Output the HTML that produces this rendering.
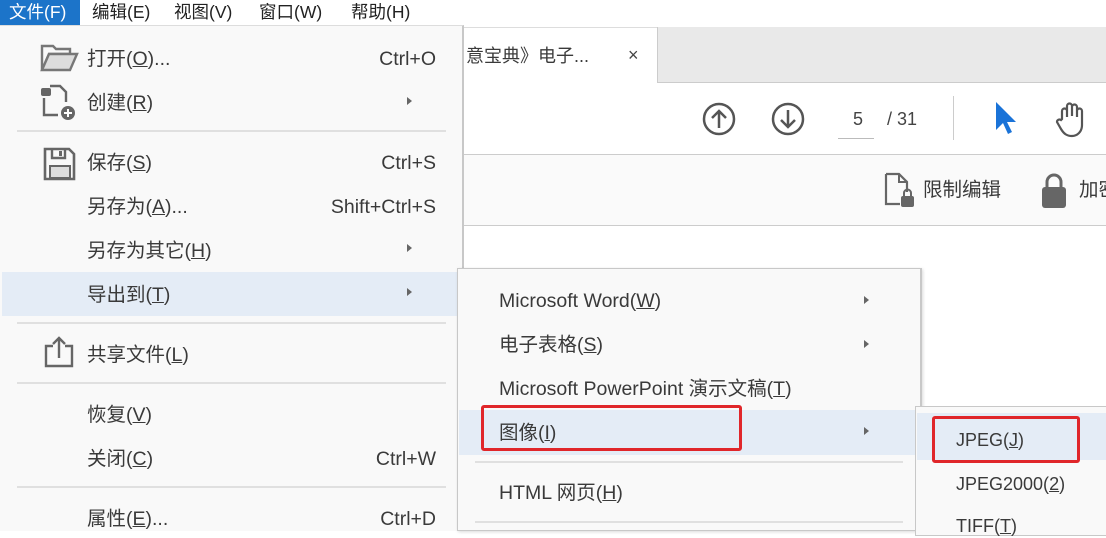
<!DOCTYPE html>
<html><head><meta charset="utf-8"><style>
*{margin:0;padding:0;box-sizing:border-box}
body{width:1106px;height:531px;overflow:hidden;background:#fff;position:relative;font-family:"Liberation Sans","Noto Sans CJK SC",sans-serif;color:#3a3a3a;line-height:24px}
.a{position:absolute;white-space:nowrap}
.mb{font-size:17.5px;top:0px;color:#222}
.t{font-size:19.5px}
.r{position:absolute;white-space:nowrap;font-size:19.5px;right:670px}
.sep{position:absolute;height:2px;background:#e0e0e0}
.arr{position:absolute;width:0;height:0;border-left:5px solid #666;border-top:4px solid transparent;border-bottom:4px solid transparent}
u{text-decoration:underline}
</style></head><body>
<div class="a" style="left:657px;top:27px;width:449px;height:56px;background:#e9e9e9;border-bottom:1px solid #ccc;border-left:1px solid #ccc"></div>
<div class="a" style="left:460px;top:27px;width:197px;height:56px;background:#fff;border-top:1px solid #ddd"></div>
<div class="a t" style="left:466px;top:44px;font-size:18px">意宝典》电子...</div>
<div class="a" style="left:628px;top:43px;font-size:18px;color:#444">×</div>
<div class="a" style="left:460px;top:154px;width:646px;height:1px;background:#ccc"></div>
<div class="a" style="left:460px;top:155px;width:646px;height:71px;background:#fafafa;border-bottom:1px solid #ccc"></div>
<svg class="a" style="left:700px;top:100px" width="40" height="40" viewBox="0 0 40 40"><circle cx="19" cy="19" r="15" fill="none" stroke="#555" stroke-width="2.5"/><path d="M19 28V11M12 18l7-7 7 7" fill="none" stroke="#555" stroke-width="2.5"/></svg>
<svg class="a" style="left:769px;top:100px" width="40" height="40" viewBox="0 0 40 40"><circle cx="19" cy="19" r="15" fill="none" stroke="#555" stroke-width="2.5"/><path d="M19 10v17M12 20l7 7 7-7" fill="none" stroke="#555" stroke-width="2.5"/></svg>
<div class="a" style="left:853px;top:107px;font-size:18px;color:#444">5</div>
<div class="a" style="left:838px;top:138px;width:36px;height:1px;background:#bbb"></div>
<div class="a" style="left:887px;top:107px;font-size:18px;color:#444">/ 31</div>
<div class="a" style="left:953px;top:96px;width:1px;height:44px;background:#ccc"></div>
<svg class="a" style="left:990px;top:100px" width="30" height="36" viewBox="0 0 30 36"><path d="M6 2v28l7-7 5 11 4-2-5-10h9z" fill="#1a73d8"/></svg>
<svg class="a" style="left:1052px;top:99px" width="40" height="40" viewBox="0 0 40 40"><path d="M10 20V12a2.5 2.5 0 015 0v6V7a2.5 2.5 0 015 0v10V8a2.5 2.5 0 015 0v10-6a2.5 2.5 0 015 0v14c0 7-5 11-10 11s-8-2-11-7l-4-7a2.5 2.5 0 014-2z" fill="none" stroke="#555" stroke-width="2.2"/></svg>
<svg class="a" style="left:882px;top:171px" width="36" height="40" viewBox="0 0 36 40"><path d="M4 3h13l8 8v10M4 3v30h14" fill="none" stroke="#666" stroke-width="2.2"/><path d="M17 3v8h8" fill="none" stroke="#666" stroke-width="2"/><rect x="19" y="25" width="13" height="11" rx="2" fill="#666"/><path d="M22 26v-4a3.5 3.5 0 017 0v4" fill="none" stroke="#666" stroke-width="2"/></svg>
<div class="a t" style="left:923px;top:178px">限制编辑</div>
<svg class="a" style="left:1040px;top:172px" width="30" height="38" viewBox="0 0 30 38"><rect x="2" y="15" width="24" height="21" rx="3" fill="#666"/><path d="M7 16V10a7 7 0 0114 0v6" fill="none" stroke="#666" stroke-width="3"/></svg>
<div class="a t" style="left:1079px;top:178px">加密</div>

<div class="a" style="left:0;top:0;width:1106px;height:26px;background:#fff"></div>
<div class="a" style="left:0;top:0;width:80px;height:25px;background:#1c74c9"></div>
<div class="a mb" style="left:9px;color:#fff">文件(F)</div>
<div class="a mb" style="left:92px">编辑(E)</div>
<div class="a mb" style="left:174px">视图(V)</div>
<div class="a mb" style="left:259px">窗口(W)</div>
<div class="a mb" style="left:351px">帮助(H)</div>

<div class="a" style="left:0;top:25px;width:464px;height:506px;background:#f9f9f9;border-right:2px solid #c8c8c8;border-top:1px solid #ddd"></div>
<div class="a" style="left:2px;top:272px;width:458px;height:44px;background:#e4ecf6"></div>
<svg class="a" style="left:40px;top:42px" width="40" height="32" viewBox="0 0 40 32"><path d="M2 4h11l3 3h14v5H9L2 28z" fill="none" stroke="#777" stroke-width="2.4"/><path d="M2 28l7-16h28l-7 16z" fill="#ddd" stroke="#777" stroke-width="2.4"/></svg>
<div class="a t" style="left:87px;top:47px">打开(<u>O</u>)...</div>
<div class="r" style="top:47px">Ctrl+O</div>
<svg class="a" style="left:40px;top:84px" width="38" height="38" viewBox="0 0 38 38"><rect x="1" y="4" width="10" height="8" rx="2" fill="#666"/><path d="M10 2h10l6 6v10M4 14v17h14" fill="none" stroke="#666" stroke-width="2.4"/><circle cx="28" cy="29" r="7" fill="#666"/><path d="M28 25v8M24 29h8" stroke="#fff" stroke-width="2"/></svg>
<div class="a t" style="left:87px;top:91px">创建(<u>R</u>)</div>
<div class="arr" style="left:407px;top:97px"></div>
<div class="sep" style="left:17px;top:130px;width:429px"></div>
<svg class="a" style="left:43px;top:147px" width="34" height="34" viewBox="0 0 34 34"><path d="M2 2h24l5 5v25H2z" fill="none" stroke="#666" stroke-width="2.6"/><path d="M9 2v9h13V2" fill="none" stroke="#666" stroke-width="2.4"/><rect x="16" y="4" width="3" height="5" fill="#666"/><rect x="7" y="19" width="20" height="12" fill="#ddd" stroke="#666" stroke-width="2"/></svg>
<div class="a t" style="left:87px;top:151px">保存(<u>S</u>)</div>
<div class="r" style="top:151px">Ctrl+S</div>
<div class="a t" style="left:87px;top:195px">另存为(<u>A</u>)...</div>
<div class="r" style="top:195px">Shift+Ctrl+S</div>
<div class="a t" style="left:87px;top:239px">另存为其它(<u>H</u>)</div>
<div class="arr" style="left:407px;top:244px"></div>
<div class="a t" style="left:87px;top:283px">导出到(<u>T</u>)</div>
<div class="arr" style="left:407px;top:288px"></div>
<div class="sep" style="left:17px;top:322px;width:429px"></div>
<svg class="a" style="left:44px;top:336px" width="32" height="32" viewBox="0 0 32 32"><path d="M9 10H2v20h26V10h-7" fill="none" stroke="#666" stroke-width="2.4"/><path d="M15 22V2M9 8l6-6 6 6" fill="none" stroke="#666" stroke-width="2.4"/></svg>
<div class="a t" style="left:87px;top:343px">共享文件(<u>L</u>)</div>
<div class="sep" style="left:17px;top:382px;width:429px"></div>
<div class="a t" style="left:87px;top:403px">恢复(<u>V</u>)</div>
<div class="a t" style="left:87px;top:447px">关闭(<u>C</u>)</div>
<div class="r" style="top:447px">Ctrl+W</div>
<div class="sep" style="left:17px;top:486px;width:429px"></div>
<div class="a t" style="left:87px;top:507px">属性(<u>E</u>)...</div>
<div class="r" style="top:507px">Ctrl+D</div>

<div class="a" style="left:457px;top:268px;width:465px;height:263px;background:#f9f9f9;border:1px solid #c8c8c8;border-right:2px solid #c8c8c8;box-shadow:1px 1px 3px rgba(0,0,0,.15)"></div>
<div class="a" style="left:459px;top:410px;width:460px;height:45px;background:#e4ecf6"></div>
<div class="a t" style="left:499px;top:289px">Microsoft Word(<u>W</u>)</div>
<div class="arr" style="left:864px;top:296px"></div>
<div class="a t" style="left:499px;top:333px">电子表格(<u>S</u>)</div>
<div class="arr" style="left:864px;top:340px"></div>
<div class="a t" style="left:499px;top:377px">Microsoft PowerPoint 演示文稿(<u>T</u>)</div>
<div class="a t" style="left:499px;top:421px">图像(<u>I</u>)</div>
<div class="arr" style="left:864px;top:427px"></div>
<div class="a" style="left:481px;top:405px;width:261px;height:46px;border:3px solid #e0262a;border-radius:3px"></div>
<div class="sep" style="left:475px;top:461px;width:428px"></div>
<div class="a t" style="left:499px;top:481px">HTML 网页(<u>H</u>)</div>
<div class="sep" style="left:475px;top:521px;width:428px"></div>

<div class="a" style="left:915px;top:406px;width:200px;height:130px;background:#f9f9f9;border:1px solid #c8c8c8"></div>
<div class="a" style="left:917px;top:413px;width:189px;height:47px;background:#e4ecf6"></div>
<div class="a" style="left:932px;top:416px;width:148px;height:47px;border:3px solid #e0262a;border-radius:3px"></div>
<div class="a t" style="left:956px;top:428px;font-size:18px">JPEG(<u>J</u>)</div>
<div class="a t" style="left:956px;top:472px;font-size:18px">JPEG2000(<u>2</u>)</div>
<div class="a t" style="left:956px;top:514px;font-size:18px">TIFF(<u>T</u>)</div>
</body></html>
